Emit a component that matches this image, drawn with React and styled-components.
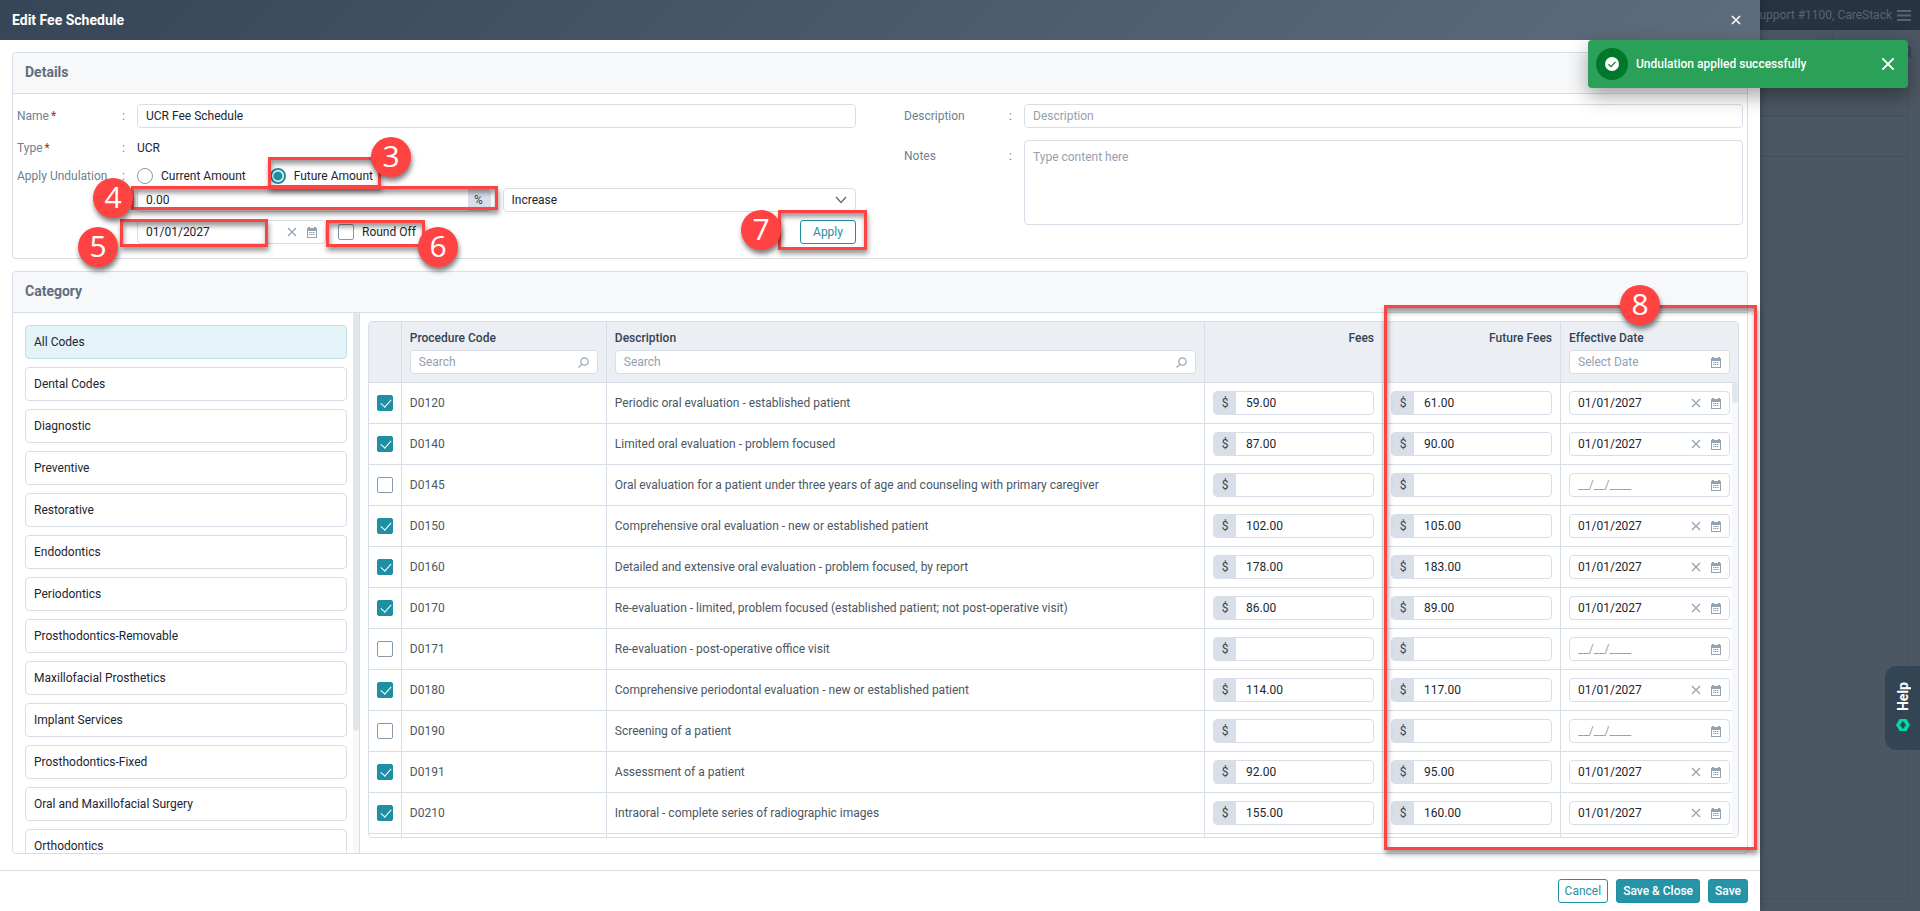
import React, { useState } from 'react';
import styled, { createGlobalStyle, css } from 'styled-components';

const categories = [
  'All Codes',
  'Dental Codes',
  'Diagnostic',
  'Preventive',
  'Restorative',
  'Endodontics',
  'Periodontics',
  'Prosthodontics-Removable',
  'Maxillofacial Prosthetics',
  'Implant Services',
  'Prosthodontics-Fixed',
  'Oral and Maxillofacial Surgery',
  'Orthodontics',
];

const procedures = [
  { code: 'D0120', description: 'Periodic oral evaluation - established patient', fee: '59.00', future: '61.00', date: '01/01/2027' },
  { code: 'D0140', description: 'Limited oral evaluation - problem focused', fee: '87.00', future: '90.00', date: '01/01/2027' },
  { code: 'D0145', description: 'Oral evaluation for a patient under three years of age and counseling with primary caregiver', fee: '', future: '', date: '' },
  { code: 'D0150', description: 'Comprehensive oral evaluation - new or established patient', fee: '102.00', future: '105.00', date: '01/01/2027' },
  { code: 'D0160', description: 'Detailed and extensive oral evaluation - problem focused, by report', fee: '178.00', future: '183.00', date: '01/01/2027' },
  { code: 'D0170', description: 'Re-evaluation - limited, problem focused (established patient; not post-operative visit)', fee: '86.00', future: '89.00', date: '01/01/2027' },
  { code: 'D0171', description: 'Re-evaluation - post-operative office visit', fee: '', future: '', date: '' },
  { code: 'D0180', description: 'Comprehensive periodontal evaluation - new or established patient', fee: '114.00', future: '117.00', date: '01/01/2027' },
  { code: 'D0190', description: 'Screening of a patient', fee: '', future: '', date: '' },
  { code: 'D0191', description: 'Assessment of a patient', fee: '92.00', future: '95.00', date: '01/01/2027' },
  { code: 'D0210', description: 'Intraoral - complete series of radiographic images', fee: '155.00', future: '160.00', date: '01/01/2027' },
];

const callouts = [
  { number: 3, box: [268, 157, 113, 31], circle: [371, 137] },
  { number: 4, box: [131, 186, 367, 24], circle: [93, 178] },
  { number: 5, box: [120, 219, 148, 28], circle: [78, 227] },
  { number: 6, box: [326, 220, 99, 27], circle: [418, 227] },
  { number: 7, box: [778, 210, 89, 40], circle: [741, 210] },
  { number: 8, box: [1384, 305, 373, 545], circle: [1620, 285] },
];

function CloseIcon({ size, width = 1.3 }) {
  return (
    <svg width={size} height={size} viewBox="0 0 10 10" fill="none" stroke="currentColor" strokeWidth={width}>
      <path d="M1 1l8 8M9 1L1 9" />
    </svg>
  );
}

function CalendarIcon() {
  return (
    <svg width="10" height="11" viewBox="0 0 10 11">
      <path fill="currentColor" fillRule="evenodd" d="M0 1h1V0h2v1h4V0h2v1h1v10H0zM1 4v6h8V4z" />
      <path fill="none" stroke="currentColor" strokeDasharray="1.500 .5" d="M2 5.500h6M2 7.500h6" />
    </svg>
  );
}

function SearchIcon() {
  return (
    <svg width="11" height="11" viewBox="0 0 11 11" fill="none" stroke="currentColor" strokeWidth="1.200">
      <circle cx="6.500" cy="4.500" r="3.700" />
      <path d="M3.900 7.200L.6 10.500" />
    </svg>
  );
}

function DateField({ label, value, placeholder = '__/__/____' }) {
  return (
    <Field>
      <FieldInput aria-label={label} defaultValue={value} placeholder={placeholder} />
      <FieldIcons>
        {value && (
          <IconButton type="button" aria-label={`Clear ${label}`}>
            <CloseIcon size={10} />
          </IconButton>
        )}
        <IconButton type="button" aria-label={`Open calendar for ${label}`}>
          <CalendarIcon />
        </IconButton>
      </FieldIcons>
    </Field>
  );
}

function SearchField({ label }) {
  return (
    <Field>
      <FieldInput aria-label={label} placeholder="Search" />
      <FieldIcons>
        <SearchIcon />
      </FieldIcons>
    </Field>
  );
}

function MoneyField({ label, value }) {
  return (
    <Field>
      <Addon>$</Addon>
      <FieldInput aria-label={label} defaultValue={value} />
    </Field>
  );
}

function DetailsCard() {
  const [amount, setAmount] = useState('future');

  return (
    <Card>
      <CardTitle>Details</CardTitle>
      <DetailsForm>
        <FormColumn>
          <FormRow>
            <FormLabel htmlFor="name">
              <span>Name<Required>*</Required></span>
            </FormLabel>
            <Field>
              <FieldInput id="name" defaultValue="UCR Fee Schedule" />
            </Field>
          </FormRow>
          <FormRow $gap={8}>
            <FormLabel as="div">
              <span>Type<Required>*</Required></span>
            </FormLabel>
            <span>UCR</span>
          </FormRow>
          <FormRow $gap={4}>
            <FormLabel as="div">
              <span>Apply Undulation</span>
            </FormLabel>
            <RadioGroup>
              <ChoiceLabel>
                <Radio
                  type="radio"
                  name="amount"
                  checked={amount === 'current'}
                  onChange={() => setAmount('current')}
                />
                Current Amount
              </ChoiceLabel>
              <ChoiceLabel>
                <Radio
                  type="radio"
                  name="amount"
                  checked={amount === 'future'}
                  onChange={() => setAmount('future')}
                />
                Future Amount
              </ChoiceLabel>
            </RadioGroup>
          </FormRow>
          <AmountRow>
            <Field>
              <FieldInput aria-label="Undulation amount" defaultValue="0.00" />
              <Addon>%</Addon>
            </Field>
            <SelectWrap>
              <Select aria-label="Direction" defaultValue="Increase">
                <option>Increase</option>
                <option>Decrease</option>
              </Select>
              <svg width="12" height="8" viewBox="0 0 12 8" fill="none" stroke="#5e6d7d" strokeWidth="1.300">
                <path d="M1 1l5 5.500L11 1" />
              </svg>
            </SelectWrap>
          </AmountRow>
          <ApplyRow>
            <DateBox>
              <DateField label="effective date" value="01/01/2027" />
            </DateBox>
            <ChoiceLabel>
              <Checkbox type="checkbox" />
              Round Off
            </ChoiceLabel>
            <ApplyButton>Apply</ApplyButton>
          </ApplyRow>
        </FormColumn>
        <FormColumn>
          <FormRow>
            <FormLabel htmlFor="description">
              <span>Description</span>
            </FormLabel>
            <Field>
              <FieldInput id="description" placeholder="Description" />
            </Field>
          </FormRow>
          <FormRow $gap={12} $top>
            <FormLabel htmlFor="notes" $top>
              <span>Notes</span>
            </FormLabel>
            <Notes id="notes" placeholder="Type content here" />
          </FormRow>
        </FormColumn>
      </DetailsForm>
    </Card>
  );
}

function CategoryCard() {
  const [category, setCategory] = useState('All Codes');

  return (
    <Card $grow>
      <CardTitle>Category</CardTitle>
      <CategoryBody>
        <Sidebar>
          <CategoryList>
            {categories.map((name) => (
              <CategoryButton key={name} $active={name === category} onClick={() => setCategory(name)}>
                {name}
              </CategoryButton>
            ))}
          </CategoryList>
          <ScrollTrack>
            <ScrollThumb $height="418px" />
          </ScrollTrack>
        </Sidebar>
        <TableFrame>
          <Table>
            <colgroup>
              <Col $width="33px" />
              <Col $width="205px" />
              <Col />
              <Col $width="178px" />
              <Col $width="178px" />
              <Col $width="177px" />
            </colgroup>
            <thead>
              <tr>
                <HeadCell aria-label="Selected" />
                <HeadCell>
                  Procedure Code
                  <SearchField label="Search procedure code" />
                </HeadCell>
                <HeadCell>
                  Description
                  <SearchField label="Search description" />
                </HeadCell>
                <HeadCell $right>Fees</HeadCell>
                <HeadCell $right>Future Fees</HeadCell>
                <HeadCell>
                  Effective Date
                  <DateField label="effective date filter" placeholder="Select Date" />
                </HeadCell>
              </tr>
            </thead>
            <tbody>
              {procedures.map((row) => (
                <tr key={row.code}>
                  <Cell>
                    <Checkbox type="checkbox" aria-label={row.code} defaultChecked={row.fee !== ''} />
                  </Cell>
                  <Cell>{row.code}</Cell>
                  <Cell>{row.description}</Cell>
                  <Cell>
                    <MoneyField label={`${row.code} fee`} value={row.fee} />
                  </Cell>
                  <Cell>
                    <MoneyField label={`${row.code} future fee`} value={row.future} />
                  </Cell>
                  <Cell>
                    <DateField label={`${row.code} effective date`} value={row.date} />
                  </Cell>
                </tr>
              ))}
              <tr>
                <Cell />
                <Cell />
                <Cell />
                <Cell />
                <Cell />
                <Cell />
              </tr>
            </tbody>
          </Table>
          <TableTrack>
            <ScrollThumb $height="20px" />
          </TableTrack>
        </TableFrame>
      </CategoryBody>
    </Card>
  );
}

function Callout({ number, box, circle }) {
  return (
    <>
      <CalloutBox $rect={box} />
      <CalloutCircle $at={circle}>{number}</CalloutCircle>
    </>
  );
}

export default function App() {
  return (
    <Page>
      <GlobalStyle />
      <Dialog>
        <DialogHeader>
          <DialogTitle>Edit Fee Schedule</DialogTitle>
          <IconButton aria-label="Close dialog" $light>
            <CloseIcon size={10} width={1.6} />
          </IconButton>
        </DialogHeader>
        <DialogBody>
          <DetailsCard />
          <CategoryCard />
        </DialogBody>
        <DialogFooter>
          <Button>Cancel</Button>
          <Button $primary>Save &amp; Close</Button>
          <Button $primary>Save</Button>
        </DialogFooter>
      </Dialog>
      <Backdrop>
        <TopBar>
          <Account>Support #1100, CareStack</Account>
          <svg width="14" height="11" viewBox="0 0 14 11" fill="currentColor">
            <path d="M0 0h14v2H0zM0 4.500h14v2H0zM0 9h14v2H0z" />
          </svg>
        </TopBar>
        <ToolStrip>
          <ToolCell>
            <SearchPill />
          </ToolCell>
          <ToolCell />
          <ToolCell>
            <svg width="14" height="14" viewBox="0 0 14 14" fill="none" stroke="#36434f" strokeWidth="2">
              <circle cx="7" cy="6" r="5" />
              <path d="M10 9l3 4" />
            </svg>
          </ToolCell>
        </ToolStrip>
        <BackPanel>
          <BackLine />
          <BackLine />
        </BackPanel>
      </Backdrop>
      <Toast role="status">
        <ToastBadge>
          <svg width="14" height="14" viewBox="0 0 14 14">
            <circle cx="7" cy="7" r="7" fill="#fff" />
            <path d="M3.500 7.200L6 9.600l4.500-4.800" fill="none" stroke="#00782c" strokeWidth="1.200" />
          </svg>
        </ToastBadge>
        <ToastText>Undulation applied successfully</ToastText>
        <IconButton aria-label="Dismiss" $light>
          <CloseIcon size={14} width={1.4} />
        </IconButton>
      </Toast>
      <HelpTab>
        <HelpText>Help</HelpText>
        <svg width="14" height="12" viewBox="0 0 14 12">
          <path fill="#00d8a5" fillRule="evenodd" d="M3.500 0h7L14 6l-3.500 6h-7L0 6zM7 2L4 6l3 4 3-4z" />
        </svg>
      </HelpTab>
      {callouts.map((callout) => (
        <Callout key={callout.number} {...callout} />
      ))}
    </Page>
  );
}

const GlobalStyle = createGlobalStyle`
  * {
    box-sizing: border-box;
  }

  body {
    margin: 0;
    overflow: hidden;
  }

  body, button, input, select, textarea {
    font-family: Roboto, "Liberation Sans", sans-serif;
    font-size: 12px;
    line-height: 16px;
    color: #1c2630;
  }
`;

const Page = styled.div`
  position: relative;
  display: flex;
  height: 100vh;
  background: #4b5763;
`;

const Dialog = styled.section`
  z-index: 1;
  display: flex;
  flex-direction: column;
  flex: 1;
  min-width: 0;
  background: #fff;
  box-shadow: 0 0 8px rgba(0, 0, 0, 0.3);
`;

const DialogHeader = styled.header`
  display: flex;
  align-items: center;
  justify-content: space-between;
  height: 40px;
  padding: 0 19px 0 12px;
  background: linear-gradient(135deg, #364656, #5e6d7d);
`;

const DialogTitle = styled.h1`
  margin: 0;
  color: #fff;
  font-size: 14px;
  font-weight: 700;
`;

const DialogBody = styled.main`
  display: flex;
  flex-direction: column;
  flex: 1;
  gap: 12px;
  min-height: 0;
  padding: 12px 12px 16px;
`;

const DialogFooter = styled.footer`
  display: flex;
  justify-content: flex-end;
  gap: 8px;
  height: 41px;
  padding: 8px 12px;
  border-top: 1px solid #d7dee7;
`;

const Card = styled.section`
  display: flex;
  flex-direction: column;
  flex: ${({ $grow }) => ($grow ? '1' : 'none')};
  min-height: 0;
  border: 1px solid #d7dee7;
  border-radius: 4px;
  overflow: hidden;
`;

const CardTitle = styled.h2`
  flex: none;
  height: 41px;
  margin: 0;
  padding: 0 12px;
  border-bottom: 1px solid #d7dee7;
  background: #f7f8fa;
  color: #5e6d7d;
  font-size: 14px;
  font-weight: 700;
  line-height: 38px;
`;

const DetailsForm = styled.form`
  display: grid;
  grid-template-columns: 1fr 1fr;
  gap: 48px;
  padding: 10px 4px 14px;
`;

const FormColumn = styled.div`
  min-width: 0;
`;

const FormRow = styled.div`
  display: flex;
  align-items: ${({ $top }) => ($top ? 'flex-start' : 'center')};
  min-height: 24px;
  margin-top: ${({ $gap = 0 }) => $gap}px;
`;

const FormLabel = styled.label`
  display: flex;
  flex: none;
  justify-content: space-between;
  width: 120px;
  padding: ${({ $top }) => ($top ? 8 : 4)}px 12px 4px 0;
  color: #71808f;

  &::after {
    content: ':';
  }
`;

const Required = styled.span`
  margin-left: 2px;
  color: #c8102e;
`;

const Field = styled.div`
  display: flex;
  flex: 1;
  min-width: 0;
  height: 24px;
  border: 1px solid #d7dee7;
  border-radius: 4px;
  background: #fff;
  overflow: hidden;
  font-weight: 400;
`;

const FieldInput = styled.input`
  flex: 1;
  width: 0;
  min-width: 0;
  padding: 0 8px;
  border: 0;
  outline: 0;
  background: transparent;

  &::placeholder {
    color: #93a1af;
  }
`;

const FieldIcons = styled.div`
  display: flex;
  flex: none;
  align-items: center;
  gap: 10px;
  padding-right: 8px;
  color: #93a3b1;
`;

const IconButton = styled.button`
  display: flex;
  flex: none;
  padding: 0;
  border: 0;
  background: none;
  color: ${({ $light }) => ($light ? '#fff' : '#93a3b1')};
  cursor: pointer;
`;

const Addon = styled.span`
  flex: none;
  width: 22px;
  background: #d8dfe8;
  color: #344455;
  line-height: 22px;
  text-align: center;

  & + ${FieldInput} {
    padding-left: 10px;
  }
`;

const RadioGroup = styled.div`
  display: flex;
  gap: 24px;
`;

const ChoiceLabel = styled.label`
  display: flex;
  align-items: center;
  gap: 8px;
`;

const Radio = styled.input`
  width: 16px;
  height: 16px;
  margin: 0;
  border: 1px solid #8798a8;
  border-radius: 50%;
  background: #fff;
  appearance: none;

  &:checked {
    border: 2px solid #1f8fa3;
    background: radial-gradient(circle, #1f8fa3 4px, #fff 5px);
  }
`;

const Checkbox = styled.input`
  display: block;
  flex: none;
  width: 16px;
  height: 16px;
  margin: 0;
  border: 1px solid #8798a8;
  border-radius: 2px;
  background: #fff;
  appearance: none;

  &:checked {
    position: relative;
    border-color: #1f8fa3;
    background: #1f8fa3;
  }

  &:checked::after {
    content: '';
    position: absolute;
    top: 1px;
    left: 5px;
    width: 5px;
    height: 9px;
    border: solid #fff;
    border-width: 0 1px 1px 0;
    transform: rotate(42deg);
  }
`;

const AmountRow = styled.div`
  display: grid;
  grid-template-columns: 1fr 1fr;
  gap: 12px;
  padding-left: 120px;
`;

const SelectWrap = styled.div`
  display: grid;
  align-items: center;
  justify-items: end;

  & > * {
    grid-area: 1 / 1;
  }

  & > svg {
    margin-right: 9px;
    pointer-events: none;
  }
`;

const Select = styled.select`
  width: 100%;
  height: 24px;
  padding: 0 8px;
  border: 1px solid #d7dee7;
  border-radius: 4px;
  background: #fff;
  appearance: none;
`;

const ApplyRow = styled.div`
  display: flex;
  align-items: center;
  gap: 12px;
  margin-top: 8px;
  padding-left: 120px;
`;

const DateBox = styled.div`
  display: flex;
  width: 189px;
`;

const Button = styled.button`
  height: 24px;
  padding: 0 6px;
  border: 1px solid #1f8fa3;
  border-radius: 3px;
  background: #fff;
  color: #1f8fa3;
  white-space: nowrap;

  ${({ $primary }) =>
    $primary &&
    css`
      background: #2693a7;
      color: #fff;
      font-weight: 500;
    `}
`;

const ApplyButton = styled(Button).attrs({ type: 'button' })`
  width: 56px;
  margin-left: auto;
`;

const Notes = styled.textarea`
  display: block;
  flex: 1;
  height: 85px;
  padding: 8px;
  border: 1px solid #d7dee7;
  border-radius: 4px;
  resize: none;

  &::placeholder {
    color: #93a1af;
  }
`;

const CategoryBody = styled.div`
  display: flex;
  flex: 1;
  min-height: 0;
`;

const Sidebar = styled.aside`
  position: relative;
  flex: none;
  width: 20%;
  border-right: 1px solid #d7dee7;
`;

const CategoryList = styled.nav`
  display: flex;
  flex-direction: column;
  gap: 8px;
  height: 100%;
  padding: 12px;
  overflow: auto;
  scrollbar-width: none;
`;

const CategoryButton = styled.button`
  flex: none;
  height: 34px;
  padding: 0 8px;
  border: 1px solid ${({ $active }) => ($active ? '#bfe0e5' : '#d7dee7')};
  border-radius: 4px;
  background: ${({ $active }) => ($active ? '#e3f3f7' : '#fff')};
  text-align: left;
  cursor: pointer;
`;

const ScrollTrack = styled.div`
  position: absolute;
  top: 0;
  right: 0;
  bottom: 0;
  width: 6px;
  background: #f7f8fa;
`;

const ScrollThumb = styled.div`
  height: ${({ $height }) => $height};
  border-radius: 3px;
  background: #e1e6ea;
`;

const TableFrame = styled.div`
  position: relative;
  flex: 1;
  min-width: 0;
  margin: 8px 8px 15px;
  border: 1px solid #d7dee7;
  border-radius: 4px;
  overflow: hidden;
`;

const TableTrack = styled(ScrollTrack)`
  top: 61px;
`;

const Table = styled.table`
  width: 100%;
  table-layout: fixed;
  border-collapse: separate;
  border-spacing: 0;
`;

const Col = styled.col`
  width: ${({ $width = 'auto' }) => $width};
`;

const cellBorder = css`
  border-right: 1px solid #d7dee7;
  border-bottom: 1px solid #d7dee7;

  &:last-child {
    border-right: 0;
  }
`;

const HeadCell = styled.th`
  height: 61px;
  padding: 8px;
  background: #ebeef2;
  color: #344455;
  font-weight: 500;
  line-height: 16px;
  text-align: ${({ $right }) => ($right ? 'right' : 'left')};
  vertical-align: top;
  ${cellBorder}

  ${Field} {
    margin-top: 4px;
  }
`;

const Cell = styled.td`
  height: 41px;
  padding: 0 8px;
  color: #4b5763;
  ${cellBorder}
`;

const Backdrop = styled.aside`
  display: flex;
  flex: none;
  flex-direction: column;
  width: 160px;
  padding-bottom: 12px;
`;

const TopBar = styled.div`
  display: flex;
  align-items: center;
  justify-content: flex-end;
  gap: 5px;
  height: 30px;
  padding-right: 9px;
  background: #263442;
  color: #586470;

  & > svg {
    flex: none;
  }
`;

const Account = styled.span`
  white-space: nowrap;
`;

const ToolStrip = styled.div`
  display: grid;
  grid-template-columns: 73px 53px 1fr;
  height: 30px;
`;

const ToolCell = styled.div`
  display: flex;
  align-items: flex-end;
  justify-content: flex-end;
  padding: 4px 8px 7px 0;
  border-right: 1px solid #46525e;

  &:last-child {
    border-right: 0;
  }
`;

const SearchPill = styled.div`
  width: 100%;
  height: 24px;
  border-radius: 0 12px 12px 0;
  background: #505863;
`;

const BackPanel = styled.div`
  flex: 1;
  margin-right: 12px;
  padding-top: 55px;
  border: solid #46525e;
  border-width: 0 1px 1px 0;
`;

const BackLine = styled.div`
  height: 41px;
  border-top: 1px solid #434f5b;
`;

const Toast = styled.div`
  position: absolute;
  z-index: 3;
  top: 40px;
  right: 12px;
  display: flex;
  align-items: center;
  gap: 8px;
  width: 320px;
  height: 48px;
  padding: 0 13px 0 8px;
  border-radius: 4px;
  background: #2aa058;
  box-shadow: 0 8px 20px rgba(0, 0, 0, 0.35);
`;

const ToastBadge = styled.span`
  display: grid;
  place-items: center;
  width: 32px;
  height: 32px;
  border-radius: 50%;
  background: #00782c;
`;

const ToastText = styled.span`
  flex: 1;
  color: #fff;
  font-weight: 500;
`;

const HelpTab = styled.button`
  position: absolute;
  z-index: 2;
  top: 666px;
  right: 0;
  display: flex;
  flex-direction: column;
  align-items: center;
  justify-content: flex-start;
  gap: 8px;
  width: 35px;
  height: 84px;
  padding: 16px 0 0;
  border: 0;
  border-radius: 12px 0 0 12px;
  background: #334454;
`;

const HelpText = styled.span`
  color: #fff;
  font-size: 14px;
  font-weight: 700;
  writing-mode: vertical-rl;
  transform: rotate(180deg);
`;

const CalloutBox = styled.div`
  position: absolute;
  z-index: 4;
  left: ${({ $rect }) => $rect[0]}px;
  top: ${({ $rect }) => $rect[1]}px;
  width: ${({ $rect }) => $rect[2]}px;
  height: ${({ $rect }) => $rect[3]}px;
  border: 3px solid #ff4343;
  box-shadow: 1px 4px 5px rgba(0, 0, 0, 0.4), inset 1px 4px 5px rgba(0, 0, 0, 0.4);
  pointer-events: none;
`;

const CalloutCircle = styled.span`
  position: absolute;
  z-index: 5;
  left: ${({ $at }) => $at[0]}px;
  top: ${({ $at }) => $at[1]}px;
  width: 40px;
  height: 40px;
  border-radius: 50%;
  background: #ff4343;
  box-shadow: 1px 4px 5px rgba(0, 0, 0, 0.5);
  color: #fff;
  font-family: "Open Sans", sans-serif;
  font-size: 30px;
  font-weight: 500;
  line-height: 38px;
  text-align: center;
  pointer-events: none;
`;
